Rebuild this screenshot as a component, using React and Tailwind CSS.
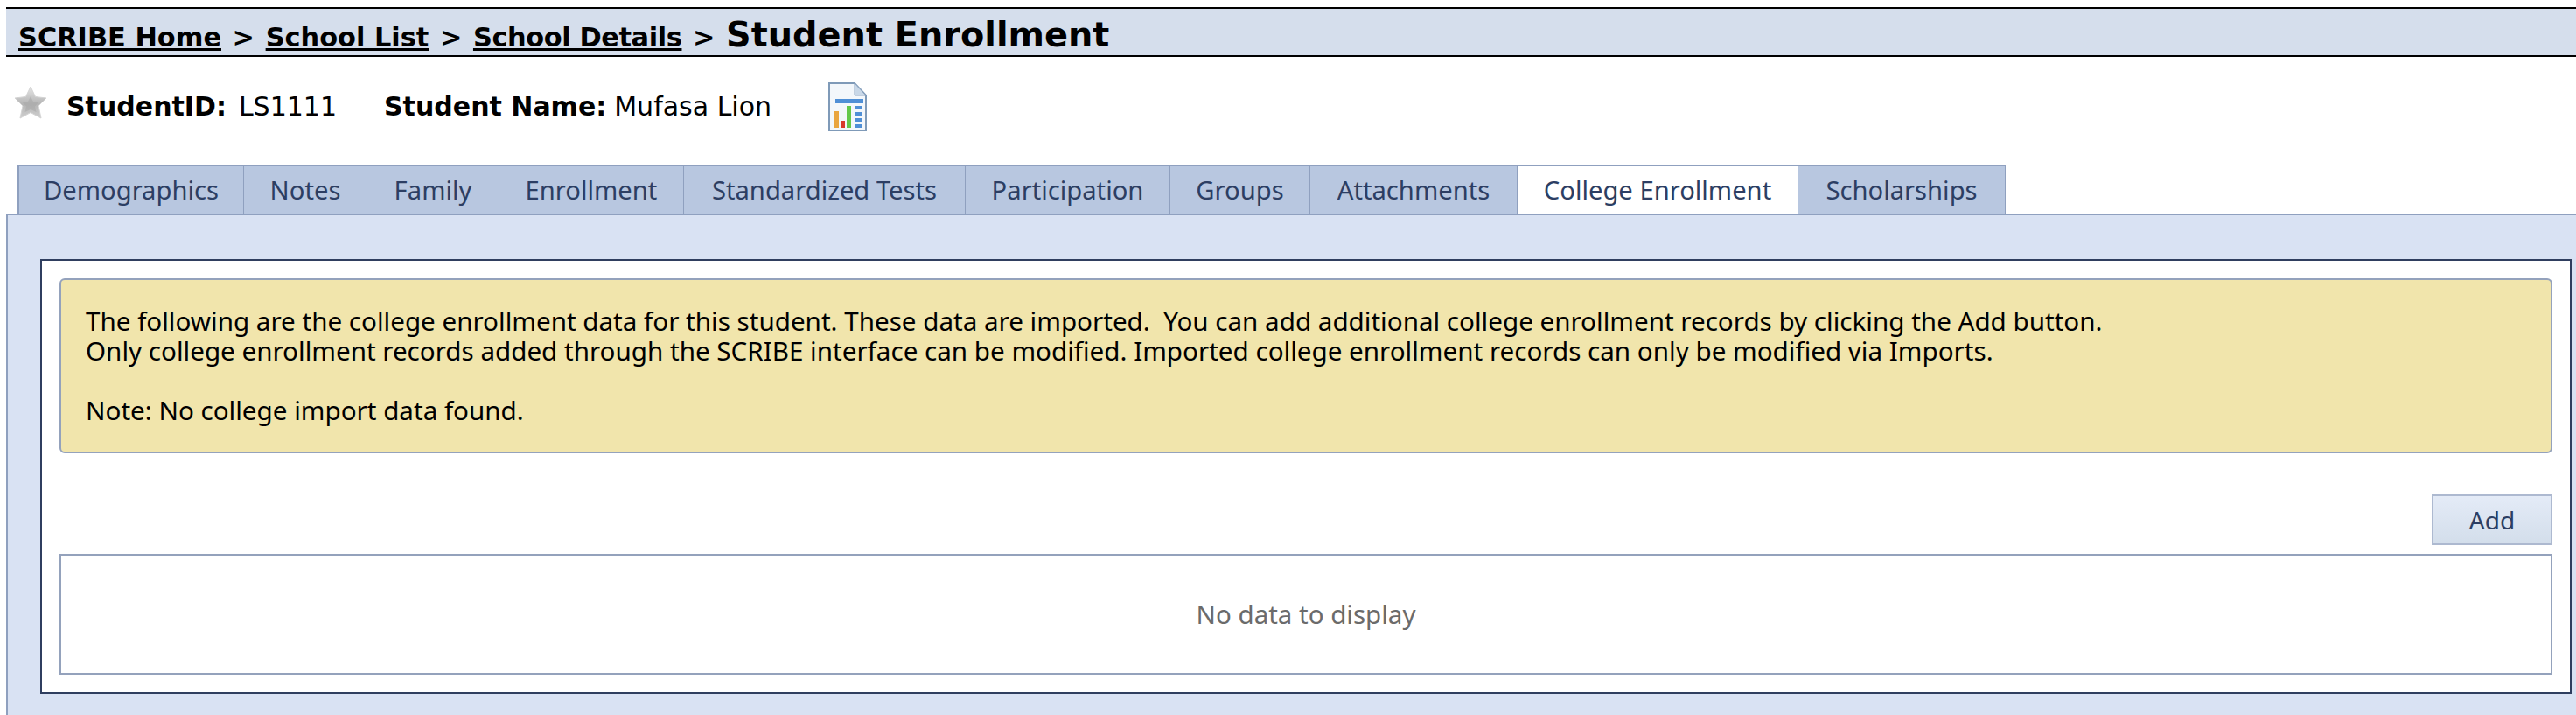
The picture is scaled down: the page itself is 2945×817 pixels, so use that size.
const TABS = [
  { label: 'Demographics', w: 'w-[259px]' },
  { label: 'Notes', w: 'w-[141px]' },
  { label: 'Family', w: 'w-[151px]' },
  { label: 'Enrollment', w: 'w-[211px]' },
  { label: 'Standardized Tests', w: 'w-[322px]' },
  { label: 'Participation', w: 'w-[234px]' },
  { label: 'Groups', w: 'w-[160px]' },
  { label: 'Attachments', w: 'w-[237px]' },
  { label: 'College Enrollment', w: 'w-[321px]', active: true },
  { label: 'Scholarships', w: 'w-[237px]' },
]

function StarIcon() {
  return (
    <svg width="38" height="38" viewBox="0 0 38 38" className="shrink-0 mb-[10px]">
      <defs>
        <linearGradient id="star" x1="0" y1="0" x2="0" y2="1">
          <stop offset="0" stopColor="#e6e6e6" />
          <stop offset="0.55" stopColor="#b5b5b5" />
          <stop offset="1" stopColor="#cfcfcf" />
        </linearGradient>
      </defs>
      <path d="M19 1 L24.5 12.5 L37 14 L28 23 L31 37 L19 30.5 L7 37 L10 23 L1 14 L13.5 12.5 Z" fill="url(#star)" stroke="#d4d4d4" strokeWidth="1" />
      <path d="M19 12 L22 18 L28.5 18.5 L24 23.5 L25.5 30 L19 27 L12.5 30 L14 23.5 L9.5 18.5 L16 18 Z" fill="#a8a8a8" opacity="0.55" />
    </svg>
  )
}

function ReportIcon() {
  return (
    <svg width="44" height="56" viewBox="0 0 44 56" className="shrink-0">
      <path d="M1 1 H30 L43 15 V55 H1 Z" fill="#f3f7fb" stroke="#7f9ab8" strokeWidth="2" />
      <path d="M30 1 V15 H43 Z" fill="#c9d8e8" stroke="#8ea6c2" strokeWidth="1" />
      <rect x="8" y="19" width="32" height="5" fill="#4f8fd6" />
      <rect x="7" y="33" width="5" height="19" fill="#e9a53f" />
      <rect x="14" y="44" width="5" height="8" fill="#d8392b" />
      <rect x="21" y="27" width="5" height="25" fill="#63c84a" />
      <rect x="30" y="27" width="9" height="4" fill="#4f8fd6" />
      <rect x="30" y="34" width="9" height="4" fill="#4f8fd6" />
      <rect x="30" y="41" width="9" height="4" fill="#4f8fd6" />
      <rect x="30" y="48" width="9" height="4" fill="#4f8fd6" />
    </svg>
  )
}

export default function App() {
  return (
    <div className="min-h-[817px] bg-white pt-2 overflow-hidden font-['DejaVu_Sans',sans-serif] text-black">
      {/* Breadcrumb */}
      <div className="ml-[7px] h-[57px] flex items-baseline pl-[14px] bg-[#d5deec] border-y-2 border-black font-bold text-[30.4px] whitespace-pre">
        <a className="underline">SCRIBE Home</a>
        <span className="mx-[2px]"> &gt; </span>
        <a className="underline">School List</a>
        <span className="mx-[2px]"> &gt; </span>
        <a className="underline tracking-[-0.4px]">School Details</a>
        <span className="mx-[2px]"> &gt; </span>
        <span className="text-[39.8px]">Student Enrollment</span>
      </div>

      {/* Student info */}
      <div className="h-[123px] flex items-center pl-[16px] text-[30px] pb-[10px]">
        <StarIcon />
        <b className="ml-[22px]">StudentID:</b>
        <span className="ml-[14px]">LS1111</span>
        <b className="ml-[54px]">Student Name:</b>
        <span className="ml-[9px]">Mufasa Lion</span>
        <div className="ml-[65px]">
          <ReportIcon />
        </div>
      </div>

      {/* Tabs */}
      <div className="flex ml-[20px] h-[56px] text-[#2c3e63] text-[29.2px] font-['Noto_Sans',sans-serif]">
        {TABS.map((t, i) => (
          <div
            key={t.label}
            className={`${t.w} flex items-center justify-center pt-[2px] border-t-2 border-r border-[#8fa0bf] ${i === 0 ? 'border-l-2' : ''} ${t.active ? 'bg-white' : 'bg-[#b8c7e0]'}`}
          >
            {t.label}
          </div>
        ))}
      </div>

      {/* Tab content */}
      <div className="ml-[7px] pl-[37px] pr-[5px] pt-[50px] pb-[24px] bg-[#d9e2f3] border-t-2 border-l-2 border-[#8fa0bf]">
        <div className="bg-white border-2 border-[#2f3e5f] px-[20px] py-[20px]">
          <div className="h-[200px] bg-[#f1e5ac] border-2 border-[#94a2bc] rounded-[6px] pl-[28px] pt-[30px] text-[29.6px] leading-[34px] font-['Noto_Sans',sans-serif]">
            <p className="whitespace-pre">The following are the college enrollment data for this student. These data are imported.  You can add additional college enrollment records by clicking the Add button.</p>
            <p>Only college enrollment records added through the SCRIBE interface can be modified. Imported college enrollment records can only be modified via Imports.</p>
            <p className="mt-[34px]">Note: No college import data found.</p>
          </div>
          <div className="flex justify-end mt-[47px] mb-[10px]">
            <button className="w-[138px] h-[58px] border-2 border-[#adb9d0] bg-linear-to-b from-[#e4ebf7] to-[#d3deeb] text-[#2c3e63] text-[28px] font-['Noto_Sans',sans-serif]">
              Add
            </button>
          </div>
          <div className="h-[138px] flex items-center justify-center border-2 border-[#94a2bc] text-[#6b6b6b] text-[29.5px] font-['Noto_Sans',sans-serif]">
            No data to display
          </div>
        </div>
      </div>
    </div>
  )
}
